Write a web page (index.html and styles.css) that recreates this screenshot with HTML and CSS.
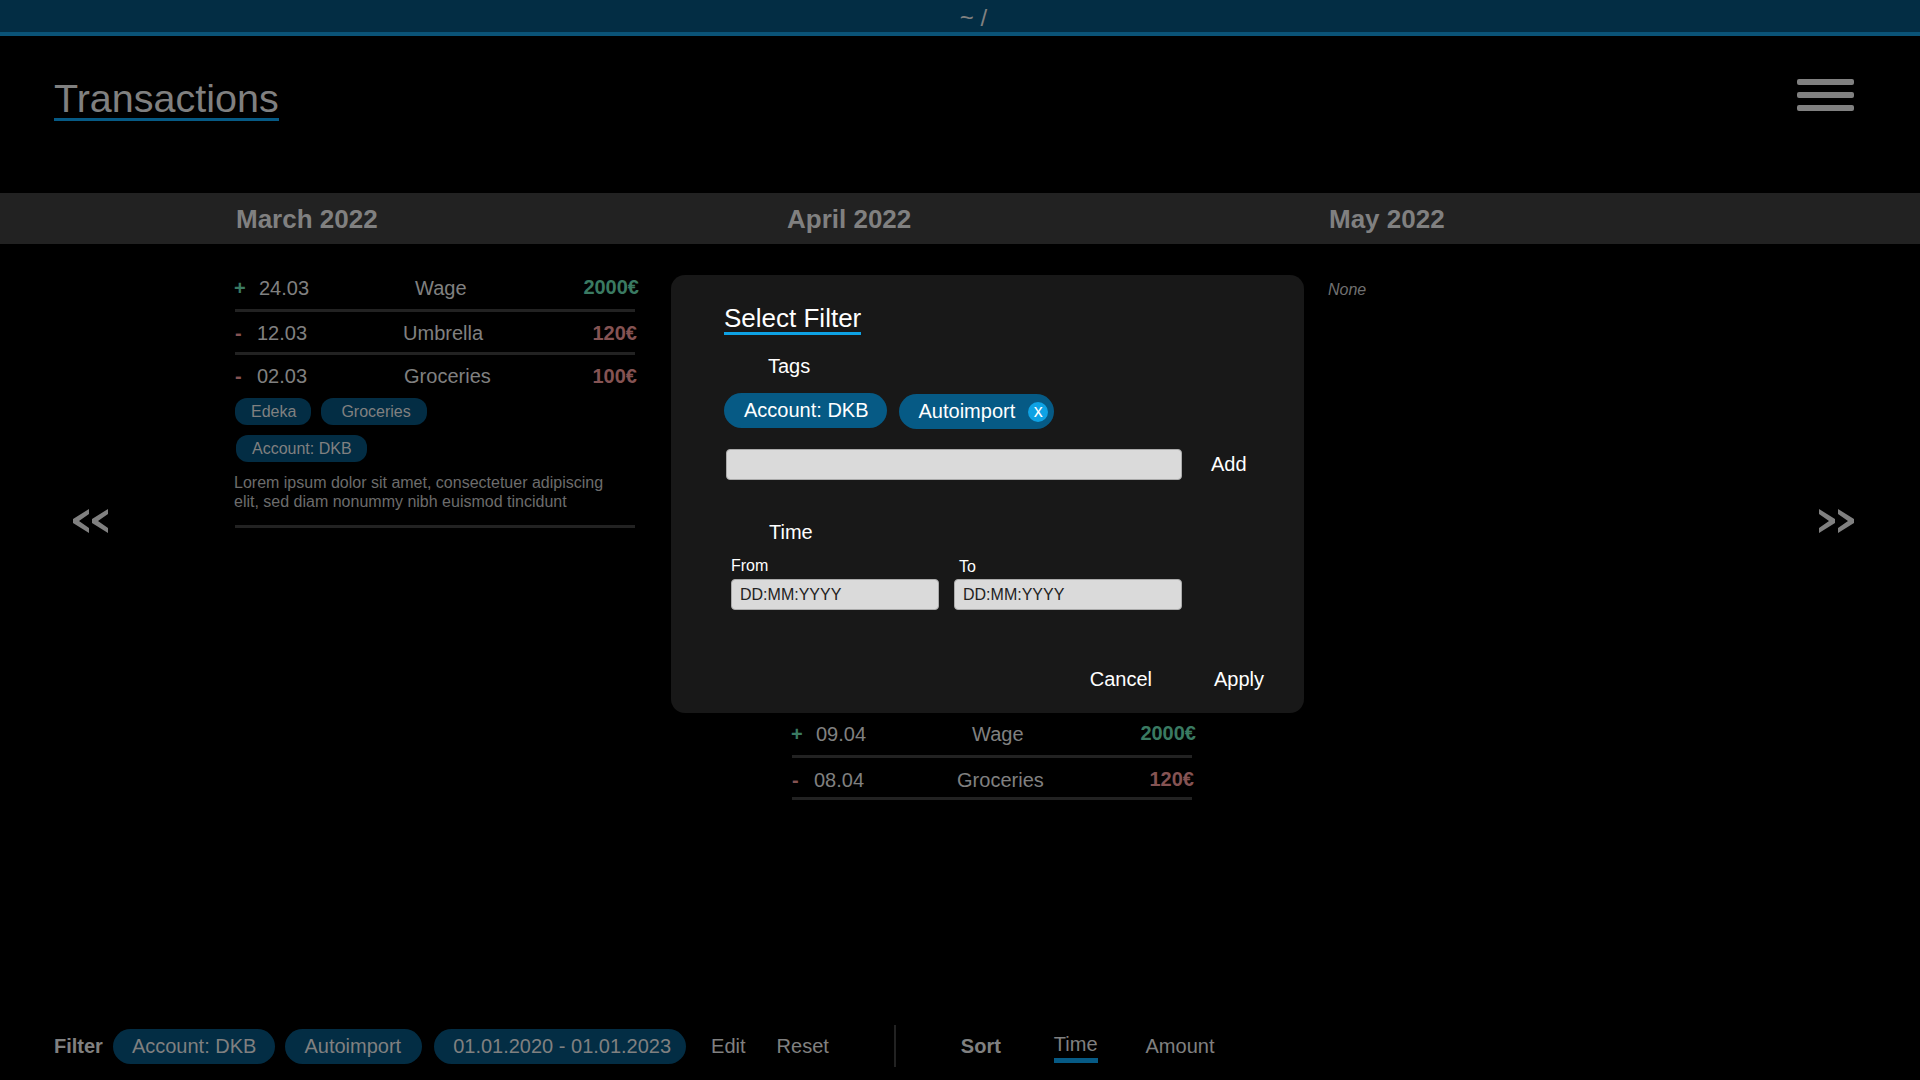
FILE: index.html
```html
<!DOCTYPE html>
<html lang="en">
<head>
    <meta charset="UTF-8">
    <meta name="viewport" content="width=device-width, initial-scale=1.0">
    <title>Transactions</title>
    <link rel="stylesheet" href="styles.css">
</head>
<body>
    <div class="topbar">~ /</div>

    <header class="header">
        <h1 class="page-title">Transactions</h1>
        <button class="menu-button" aria-label="Menu">
            <span></span>
            <span></span>
            <span></span>
        </button>
    </header>

    <div class="months">
        <div></div>
        <h2 class="month">March 2022</h2>
        <h2 class="month">April 2022</h2>
        <h2 class="month month-may">May 2022</h2>
    </div>

    <main class="columns">
        <div class="pager">
            <svg class="pager-icon" viewBox="0 0 35 26"><path d="M16 1 0 11v4l16 10v-5L6 13l10-7zM35 1 19 11v4l16 10v-5l-10-7 10-7z"/></svg>
        </div>

        <section class="list">
            <div class="tx tx-first">
                <span class="sign plus">+</span>
                <span class="date">24.03</span>
                <span class="name wage-march">Wage</span>
                <span class="amount income">2000€</span>
            </div>
            <div class="tx tx-second">
                <span class="sign minus">-</span>
                <span class="date">12.03</span>
                <span class="name umbrella">Umbrella</span>
                <span class="amount expense">120€</span>
            </div>
            <div class="tx-open">
                <div class="tx tx-third">
                    <span class="sign minus">-</span>
                    <span class="date">02.03</span>
                    <span class="name groceries-march">Groceries</span>
                    <span class="amount expense">100€</span>
                </div>
                <div class="tx-tags">
                    <span class="tag">Edeka</span>
                    <span class="tag tag-wide">Groceries</span>
                </div>
                <div class="tx-tags tx-tags-second">
                    <span class="tag">Account: DKB</span>
                </div>
                <p class="tx-note">Lorem ipsum dolor sit amet, consectetuer adipiscing elit, sed diam nonummy nibh euismod tincidunt</p>
            </div>
        </section>

        <section class="list list-april">
            <div class="tx tx-april-first">
                <span class="sign plus">+</span>
                <span class="date">09.04</span>
                <span class="name wage-april">Wage</span>
                <span class="amount income">2000€</span>
            </div>
            <div class="tx tx-april-second">
                <span class="sign minus">-</span>
                <span class="date">08.04</span>
                <span class="name groceries-april">Groceries</span>
                <span class="amount expense">120€</span>
            </div>
        </section>

        <section class="list list-may">
            <em class="none">None</em>
        </section>

        <div class="pager pager-right">
            <svg class="pager-icon" viewBox="0 0 35 26"><path d="M0 1l16 10v4L0 25v-5l10-7L0 6zM19 1l16 10v4L19 25v-5l10-7-10-7z"/></svg>
        </div>
    </main>

    <footer class="toolbar">
        <strong class="toolbar-label">Filter</strong>
        <span class="pill">Account: DKB</span>
        <span class="pill">Autoimport</span>
        <span class="pill">01.01.2020 - 01.01.2023</span>
        <a class="toolbar-link link-edit">Edit</a>
        <a class="toolbar-link link-reset">Reset</a>
        <div class="toolbar-divider"></div>
        <strong class="toolbar-label label-sort">Sort</strong>
        <a class="toolbar-link sort-active">Time</a>
        <a class="toolbar-link sort-amount">Amount</a>
    </footer>

    <div class="modal">
        <h3 class="modal-title">Select Filter</h3>

        <div class="modal-label label-tags">Tags</div>
        <div class="modal-tags">
            <span class="modal-tag">Account: DKB</span>
            <span class="modal-tag modal-tag-remove">Autoimport <span class="remove">x</span></span>
        </div>
        <div class="add-row">
            <input class="field field-tag" type="text">
            <a class="modal-action">Add</a>
        </div>

        <div class="modal-label label-time">Time</div>
        <div class="time-row">
            <label class="time-field">
                <span class="time-label">From</span>
                <input class="field field-from" type="text" placeholder="DD:MM:YYYY">
            </label>
            <label class="time-field">
                <span class="time-label time-label-to">To</span>
                <input class="field field-to" type="text" placeholder="DD:MM:YYYY">
            </label>
        </div>

        <div class="modal-actions">
            <a class="modal-action">Cancel</a>
            <a class="modal-action">Apply</a>
        </div>
    </div>
</body>
</html>
```

FILE: styles.css
```css
* {
    box-sizing: border-box;
}

body {
    font-family: "Liberation Sans", Arial, sans-serif;
    font-size: 20px;
    background-color: #000;
    color: #808080;
    display: flex;
    flex-direction: column;
    height: 100vh;
    margin: 0;
    overflow: hidden;
}

/* top bar */
.topbar {
    height: 36px;
    flex-shrink: 0;
    background: #032d44;
    border-bottom: 4px solid #0a5377;
    font-size: 24px;
    text-align: center;
    line-height: 35px;
    padding-left: 27px;
}

.header {
    height: 157px;
    flex-shrink: 0;
    display: flex;
    justify-content: space-between;
    align-items: flex-start;
    padding: 43px 66px 0 54px;
}

.page-title {
    margin: 0;
    font-size: 39.5px;
    font-weight: normal;
    line-height: 39px;
    border-bottom: 3px solid #065a85;
}

.menu-button {
    width: 57px;
    display: flex;
    flex-direction: column;
    gap: 7px;
    padding: 0;
    border: none;
    background: none;
}

.menu-button span {
    height: 6px;
    border-radius: 2px;
    background: #808080;
}

/* month band */
.months {
    height: 51px;
    flex-shrink: 0;
    display: grid;
    grid-template-columns: 236px 551px 543px 1fr;
    align-items: center;
    background: #222;
}

.month {
    margin: 2px 0 0;
    font-size: 26px;
}

.month-may {
    margin-top: 1px;
    margin-left: -1px;
}

/* columns */
.columns {
    flex: 1;
    display: grid;
    grid-template-columns: 235px 557px 536px 1fr 112px;
}

.pager {
    padding: 264px 0 0 73px;
}

.pager-right {
    padding-left: 11px;
}

.pager-icon {
    display: block;
    width: 35px;
    height: 26px;
    fill: #808080;
}

.list {
    padding-top: 33px;
}

.list-april {
    padding-top: 479px;
}

.list-may {
    grid-column: 4;
    padding-top: 33px;
    padding-left: 0;
}

.tx {
    width: 400px;
    display: flex;
    align-items: flex-start;
    line-height: 23px;
    border-bottom: 3px solid #222;
}

.tx-first {
    padding: 0 0 9px;
}

.tx-second {
    padding: 10px 0 7px;
}

.tx-third {
    padding: 10px 0 0;
    border-bottom: none;
}

.tx-april-first {
    padding: 0 0 9px;
}

.tx-april-second {
    padding: 11px 0 5px;
}

.sign {
    width: 22px;
    font-weight: bold;
}

.sign.plus {
    width: 25px;
    margin-left: -1px;
    color: #3a7a62;
}

.sign.minus {
    color: #855353;
}

.name.wage-march {
    margin-left: 106px;
}

.name.umbrella {
    margin-left: 96px;
}

.name.groceries-march {
    margin-left: 97px;
}

.name.wage-april {
    margin-left: 106px;
}

.name.groceries-april {
    margin-left: 93px;
}

.amount {
    margin-left: auto;
    margin-right: -2px;
    font-weight: bold;
    line-height: 23px;
}

.tx-first .amount {
    margin-right: -4px;
    line-height: 21px;
}

.tx-april-first .amount {
    margin-right: -4px;
    line-height: 20px;
}

.tx-april-second .amount {
    line-height: 21px;
}

.income {
    color: #3a7a62;
}

.expense {
    color: #855353;
}

.tx-open {
    width: 400px;
    padding-bottom: 14px;
    border-bottom: 3px solid #222;
}

.tx-tags {
    display: flex;
    gap: 10px;
    margin-top: 10px;
}

.tx-tags-second {
    margin: 10px 0 0 1px;
}

.tag {
    height: 27px;
    padding: 0 15px 0 16px;
    border-radius: 12px;
    background: #032d44;
    font-size: 16px;
    line-height: 27px;
}

.tag-wide {
    padding: 0 16px 0 20px;
}

.tx-note {
    margin: 11px 0 0 -1px;
    padding-right: 20px;
    font-size: 16px;
    line-height: 19px;
    color: #6c6c6c;
}

.none {
    font-size: 16px;
    color: #707070;
}

/* bottom bar */
.toolbar {
    height: 55px;
    flex-shrink: 0;
    display: flex;
    align-items: center;
    padding: 0 0 13px 54px;
}

.pill {
    height: 35px;
    margin-left: 10px;
    padding: 0 21px 0 19px;
    border-radius: 18px;
    background: #032d44;
    line-height: 35px;
}

.pill:nth-of-type(1) {
    padding: 0 19px;
}

.pill:nth-of-type(3) {
    margin-left: 12px;
    padding: 0 15px 0 19px;
}

.link-edit {
    margin-left: 25px;
}

.link-reset {
    margin-left: 31px;
}

.toolbar-divider {
    width: 2px;
    height: 42px;
    margin-left: 65px;
    background: #222;
}

.label-sort {
    margin-left: 65px;
}

.sort-active {
    margin-left: 53px;
    padding-bottom: 2px;
    line-height: 23px;
    margin-top: 3px;
    border-bottom: 5px solid #065a85;
}

.sort-amount {
    margin-left: 48px;
}

/* filter dialog */
.modal {
    position: absolute;
    left: 671px;
    top: 275px;
    width: 633px;
    height: 438px;
    padding: 27px 0 0 53px;
    background: #181818;
    border-radius: 14px;
    color: #fff;
}

.modal-title {
    display: inline-block;
    margin: -1px 0 0;
    padding-top: 3px;
    font-size: 26px;
    font-weight: normal;
    line-height: 28px;
    border-bottom: 3px solid #0ea2e4;
}

.modal-label {
    margin-left: 45px;
}

.label-tags {
    margin-top: 20px;
    margin-left: 44px;
}

.label-time {
    margin-top: 41px;
}

.modal-tags {
    display: flex;
    gap: 12px;
    margin-top: 15px;
}

.modal-tag {
    height: 35px;
    padding: 0 18px 0 20px;
    border-radius: 18px;
    background: #065a85;
    line-height: 35px;
}

.modal-tag-remove {
    display: flex;
    align-items: center;
    gap: 13px;
    margin-top: 1px;
    padding-right: 6px;
    white-space: nowrap;
}

.remove {
    width: 20px;
    height: 20px;
    border-radius: 50%;
    background: #0ea2e4;
    font-size: 18px;
    line-height: 18px;
    text-align: center;
}

.add-row {
    display: flex;
    align-items: center;
    margin: 20px 0 0 2px;
}

.field {
    height: 31px;
    padding: 0 8px;
    border: 1px solid #aaa;
    border-radius: 4px;
    background: #dadada;
    font-family: inherit;
    font-size: 16px;
}

.field::placeholder {
    color: #222;
    opacity: 1;
}

.field-tag {
    width: 456px;
}

.add-row .modal-action {
    margin-left: 29px;
}

.time-row {
    display: flex;
    gap: 15px;
    margin: 12px 0 0 7px;
}

.time-field {
    display: flex;
    flex-direction: column;
}

.time-label {
    font-size: 16px;
    line-height: 18px;
    margin-bottom: 4px;
    padding-top: 1px;
}

.time-label-to {
    padding: 2px 0 0 5px;
    margin-bottom: 3px;
}

.field-from {
    width: 208px;
}

.field-to {
    width: 228px;
}

.modal-actions {
    display: flex;
    justify-content: flex-end;
    gap: 62px;
    margin: 58px 40px 0 0;
}
```
